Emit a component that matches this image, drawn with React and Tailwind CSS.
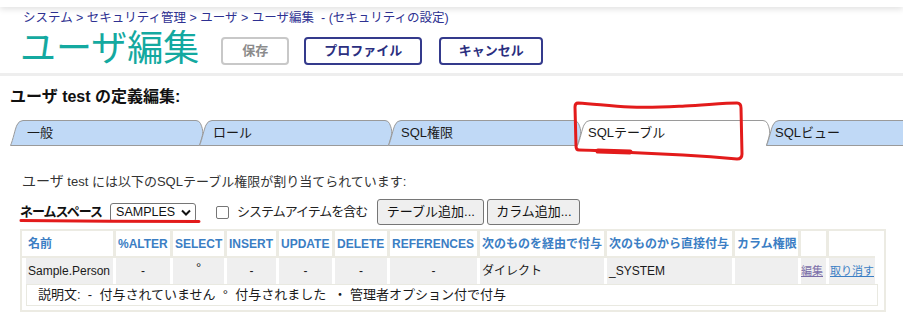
import React from "react";

const edge =
  "M0.5,25.5 C3,20 5,9 7,5 Q9,0.5 13,0.5 L186,0.5 Q189,0.5 190.5,3.5 C192.5,8 193.5,12 192,17 L189.5,25.5";

function Tab({ label, active, padClass }) {
  return (
    <div className="relative flex h-[26px] w-[189px] shrink-0 items-center">
      <svg
        className="absolute left-0 top-0 overflow-visible"
        width="189"
        height="26"
      >
        <path
          d={active ? edge : edge + " Z"}
          fill={active ? "#ffffff" : "#c0d9f6"}
          stroke="#9a9a9a"
          strokeWidth="1"
        />
      </svg>
      <span
        className={
          "relative whitespace-nowrap text-[13px] leading-[16px] text-[#1a1a1a] " +
          padClass
        }
      >
        {label}
      </span>
    </div>
  );
}

const headers = [
  "名前",
  "%ALTER",
  "SELECT",
  "INSERT",
  "UPDATE",
  "DELETE",
  "REFERENCES",
  "次のものを経由で付与",
  "次のものから直接付与",
  "カラム権限",
  "",
  "",
];

export default function App() {
  return (
    <div className="relative h-[331px] w-[903px] overflow-hidden bg-white font-['Liberation_Sans','Noto_Sans_CJK_JP',sans-serif] text-[#222]">
      {/* top bar shadow */}
      <div className="relative z-10 h-[7px] bg-white shadow-[0_2px_6px_rgba(0,0,0,0.13)]"></div>

      {/* breadcrumb */}
      <div className="pl-[23px] pt-[2px] text-[12.5px] leading-[18px] text-[#2e3192] whitespace-nowrap">
        システム &gt; セキュリティ管理 &gt; ユーザ &gt; ユーザ編集&nbsp; - (セキュリティの設定)
      </div>

      {/* title row */}
      <div className="flex h-[44px] items-center pl-[20px]">
        <div className="text-[36px] leading-[40px] text-[#14a9a0] whitespace-nowrap">
          ユーザ編集
        </div>
        <button className="ml-[22px] mt-[4px] flex h-[28px] w-[68px] items-center justify-center rounded-[4px] border-2 border-[#c8c8c8] bg-white text-[13px] font-bold text-[#8c8c8c]">
          保存
        </button>
        <button className="ml-[15px] mt-[4px] flex h-[28px] w-[118px] items-center justify-center rounded-[4px] border-2 border-[#343a8c] bg-white text-[13px] font-bold text-[#2b2f7f]">
          プロファイル
        </button>
        <button className="ml-[17px] mt-[4px] flex h-[28px] w-[104px] items-center justify-center rounded-[4px] border-2 border-[#343a8c] bg-white text-[13px] font-bold text-[#2b2f7f]">
          キャンセル
        </button>
      </div>

      {/* separator */}
      <div className="mt-[2px] h-[3px] bg-[#eeeeee]"></div>

      {/* section title */}
      <div className="mt-[11px] pl-[10px] text-[16px] font-bold leading-[20px] text-[#111] whitespace-nowrap">
        ユーザ test の定義編集:
      </div>

      {/* tabs */}
      <div className="mt-[13px] flex pl-[10px]">
        <Tab label="一般" padClass="pl-[17px]" />
        <Tab label="ロール" padClass="pl-[14px]" />
        <Tab label="SQL権限" padClass="pl-[13px]" />
        <Tab label="SQLテーブル" padClass="pl-[11px]" active />
        <Tab label="SQLビュー" padClass="pl-[9px]" />
      </div>

      {/* description */}
      <div className="mt-[25px] pl-[22px] text-[13px] leading-[20px] text-[#333] whitespace-nowrap">
        <span className="text-[14px]">ユーザ</span> test には以下のSQLテーブル権限が割り当てられています:
      </div>

      {/* controls row */}
      <div className="mt-[7px] flex h-[26px] items-center pl-[20px]">
        <span className="text-[13px] font-bold tracking-[-1px] text-[#111] whitespace-nowrap">
          ネームスペース
        </span>
        <div className="ml-[8px] flex h-[19px] w-[86px] items-center rounded-[3px] border border-[#767676] bg-white pl-[5px] pr-[4px]">
          <span className="text-[12.5px] leading-[16px] text-[#111]">SAMPLES</span>
          <svg className="ml-auto" width="10" height="7" viewBox="0 0 10 7">
            <path d="M1 1.5 L5 5.5 L9 1.5" fill="none" stroke="#111" strokeWidth="2" />
          </svg>
        </div>
        <div className="ml-[20px] h-[13px] w-[13px] rounded-[2px] border border-[#767676] bg-white"></div>
        <span className="ml-[8px] text-[13px] tracking-[-1px] text-[#222] whitespace-nowrap">
          システムアイテムを含む
        </span>
        <button className="ml-[10px] flex h-[26px] w-[107px] items-center justify-center rounded-[3px] border border-[#767676] bg-[#efefef] text-[13px] text-[#111] whitespace-nowrap">
          テーブル追加...
        </button>
        <button className="ml-[3px] flex h-[26px] w-[93px] items-center justify-center rounded-[3px] border border-[#767676] bg-[#efefef] text-[13px] text-[#111] whitespace-nowrap">
          カラム追加...
        </button>
      </div>

      {/* table */}
      <div className="ml-[20px] mt-[4px] w-[866px] border-2 border-[#ecebe3] bg-white pb-[4px]">
        <div className="inline-grid grid-cols-[91px_54px_51px_49px_53px_52px_87px_124px_125px_63px_25px_46px] gap-x-[3px] bg-[#ecebe3] pb-[2px] align-top">
          {headers.map((h, i) => (
            <div
              key={i}
              className={
                "flex h-[25px] items-center bg-white text-[12px] font-bold text-[#3b7ec4] whitespace-nowrap " +
                (i === 0 ? "pl-[6px]" : "pl-[2px]")
              }
            >
              {h}
            </div>
          ))}
        </div>
        <div className="ml-[4px] grid h-[24px] grid-cols-[87px_54px_51px_49px_53px_52px_87px_124px_125px_63px_25px_46px] gap-x-[3px] text-[12px] text-[#1a1a1a]">
          <div className="flex items-center bg-[#efefef] pl-[2px] whitespace-nowrap">Sample.Person</div>
          <div className="flex items-center justify-center bg-[#efefef]">-</div>
          <div className="flex items-center justify-center bg-[#efefef] pb-[6px] text-[13px]">°</div>
          <div className="flex items-center justify-center bg-[#efefef]">-</div>
          <div className="flex items-center justify-center bg-[#efefef]">-</div>
          <div className="flex items-center justify-center bg-[#efefef]">-</div>
          <div className="flex items-center justify-center bg-[#efefef]">-</div>
          <div className="flex items-center bg-[#efefef] pl-[2px] whitespace-nowrap">ダイレクト</div>
          <div className="flex items-center bg-[#efefef] pl-[2px] whitespace-nowrap">_SYSTEM</div>
          <div className="bg-[#efefef]"></div>
          <div className="flex items-center bg-[#efefef] text-[11px] whitespace-nowrap">
            <a className="text-[#7a6ea8] underline">編集</a>
          </div>
          <div className="flex items-center bg-[#efefef] pl-[1px] text-[11px] whitespace-nowrap">
            <a className="text-[#3b7ec4] underline">取り消す</a>
          </div>
        </div>
        <div className="ml-[4px] mt-[2px] flex h-[22px] w-[852px] items-center border border-[#e9e9e1] pl-[11px] text-[13px] text-[#1a1a1a] whitespace-nowrap">
          説明文:&nbsp; -&nbsp; 付与されていません&nbsp; °&nbsp; 付与されました&nbsp; ・ 管理者オプション付で付与
        </div>
      </div>

      {/* red annotations */}
      <svg
        className="pointer-events-none absolute left-0 top-0"
        width="903"
        height="331"
      >
        <path
          d="M578,103 C595,104 610,106 630,107 C650,108 665,107 685,106 C705,105 725,103 737,103 Q741,103 741,108 L742,154 Q742,159 737,159 C715,157 700,156 683,155 C660,154 640,153 620,152 C605,151 590,150 579,150 Q576,150 576,146 L575,107 Q575,103 578,103 Z"
          fill="none"
          stroke="#e31b1b"
          strokeWidth="3"
          strokeLinejoin="round"
        />
        <path d="M598,151 L630,152" stroke="#e31b1b" strokeWidth="5" strokeLinecap="round" />
        <path
          d="M21,220.5 C80,221 140,221.5 199,221.5"
          fill="none"
          stroke="#e31b1b"
          strokeWidth="3"
          strokeLinecap="round"
        />
      </svg>
    </div>
  );
}
